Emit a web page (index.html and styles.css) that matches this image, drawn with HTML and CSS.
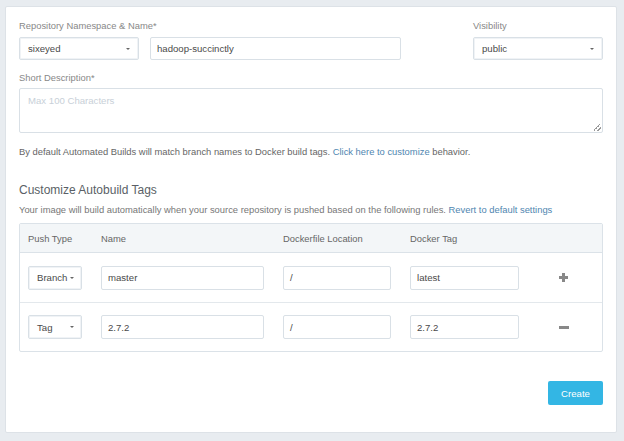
FILE: index.html
```html
<!DOCTYPE html>
<html>
<head>
<meta charset="utf-8">
<link rel="stylesheet" href="styles.css">
</head>
<body>
<div class="card">
  <div class="top-row">
    <div class="field">
      <div class="label">Repository Namespace &amp; Name*</div>
      <div class="pair">
        <div class="select ns"><span>sixeyed</span><i class="caret"></i></div>
        <div class="input name">hadoop-succinctly</div>
      </div>
    </div>
    <div class="field">
      <div class="label">Visibility</div>
      <div class="select vis"><span>public</span><i class="caret"></i></div>
    </div>
  </div>
  <div class="label desc-label">Short Description*</div>
  <div class="textarea"><span class="placeholder">Max 100 Characters</span><i class="grip"></i></div>
  <p class="help">By default Automated Builds will match branch names to Docker build tags. <span class="link">Click here to customize</span> behavior.</p>
  <h2 class="heading">Customize Autobuild Tags</h2>
  <p class="help sub">Your image will build automatically when your source repository is pushed based on the following rules. <span class="link">Revert to default settings</span></p>
  <div class="table">
    <div class="trow head">
      <div>Push Type</div><div>Name</div><div>Dockerfile Location</div><div>Docker Tag</div><div></div>
    </div>
    <div class="trow">
      <div class="select small"><span>Branch</span><i class="caret"></i></div>
      <div class="input">master</div>
      <div class="input">/</div>
      <div class="input">latest</div>
      <div class="icon-cell"><span class="plus"></span></div>
    </div>
    <div class="trow">
      <div class="select small"><span>Tag</span><i class="caret"></i></div>
      <div class="input">2.7.2</div>
      <div class="input">/</div>
      <div class="input">2.7.2</div>
      <div class="icon-cell"><span class="minus"></span></div>
    </div>
  </div>
  <div class="actions"><button class="btn">Create</button></div>
</div>
</body>
</html>
```
FILE: styles.css
```css
* { box-sizing: border-box; }
body {
  margin: 0;
  background: #e8ecf0;
  font-family: "Liberation Sans", Arial, sans-serif;
  font-size: 9.4px;
  color: #555;
  height: 441px;
  overflow: hidden;
}
.card {
  margin: 6px 7px 0 5px;
  height: 427px;
  background: #fff;
  border: 1px solid #dde2e7;
  border-radius: 2px;
  padding: 12px 13px 0 13px;
}
.top-row {
  display: flex;
  justify-content: space-between;
}
.label {
  color: #888;
  font-size: 9.4px;
  line-height: 14px;
  margin-bottom: 4px;
}
.pair { display: flex; gap: 11px; }
.select, .input {
  height: 23px;
  border: 1px solid #d9e0e6;
  border-radius: 2px;
  display: flex;
  align-items: center;
  padding: 0 6px;
  color: #4a4a4a;
  font-size: 9.6px;
  background: #fff;
}
.select {
  justify-content: space-between;
  padding: 0 8px;
  box-shadow: inset 0 0 0 1px #f0f3f6;
}
.caret {
  width: 0; height: 0;
  border-left: 2.5px solid transparent;
  border-right: 2.5px solid transparent;
  border-top: 2.5px solid #666;
}
.ns { width: 120px; }
.name { width: 251px; }
.vis { width: 130px; }
.desc-label { margin-top: 11px; margin-bottom: 3px; }
.textarea {
  height: 45px;
  border: 1px solid #d9e0e6;
  border-radius: 2px;
  padding: 6px 8px;
  position: relative;
}
.placeholder { color: #c8d0d8; font-size: 9.6px; }
.grip {
  position: absolute;
  right: 1px; bottom: 1px;
  width: 7px; height: 7px;
  background: linear-gradient(135deg, transparent 40%, #999 40%, #999 50%, transparent 50%, transparent 70%, #999 70%, #999 80%, transparent 80%);
}
.help {
  margin: 12px 0 0;
  line-height: 14px;
  color: #666;
  font-size: 9.4px;
}
.link { color: #4f86b0; }
.heading {
  margin: 22px 0 0;
  font-size: 12px;
  font-weight: normal;
  line-height: 18px;
  color: #5a5f66;
}
.sub { margin-top: 4px; color: #777; }
.table {
  margin-top: 6px;
  width: 584px;
  border: 1px solid #dbe2e8;
  border-radius: 2px;
}
.trow {
  display: grid;
  grid-template-columns: 54px 163px 108px 109px 1fr;
  column-gap: 19px;
  padding-left: 8px;
  align-items: center;
  height: 50px;
  border-top: 1px solid #e3e8ec;
}
.trow.head {
  height: 29px;
  border-top: none;
  background: #f3f6f8;
  color: #666;
  font-size: 9.4px;
  border-bottom: 1px solid #dbe2e8;
}
.trow.head + .trow { border-top: none; height: 49px; }
.trow:last-child { height: 49px; }
.trow .select, .trow .input { height: 24px; }
.small { padding: 0 7px 0 8px; }
.icon-cell { padding-left: 21px; display: flex; align-items: center; }
.plus {
  width: 9px; height: 9px;
  background:
    linear-gradient(#888, #888) center/9px 3px no-repeat,
    linear-gradient(#888, #888) center/3px 9px no-repeat;
}
.minus {
  width: 10px; height: 3px;
  background: #888;
}
.actions {
  display: flex;
  justify-content: flex-end;
  margin-top: 29px;
}
.btn {
  width: 55px;
  height: 24px;
  border: none;
  border-radius: 2px;
  background: #33b6e4;
  color: #fff;
  font-family: "Liberation Sans", Arial, sans-serif;
  font-size: 9.6px;
  padding: 0;
}
```
